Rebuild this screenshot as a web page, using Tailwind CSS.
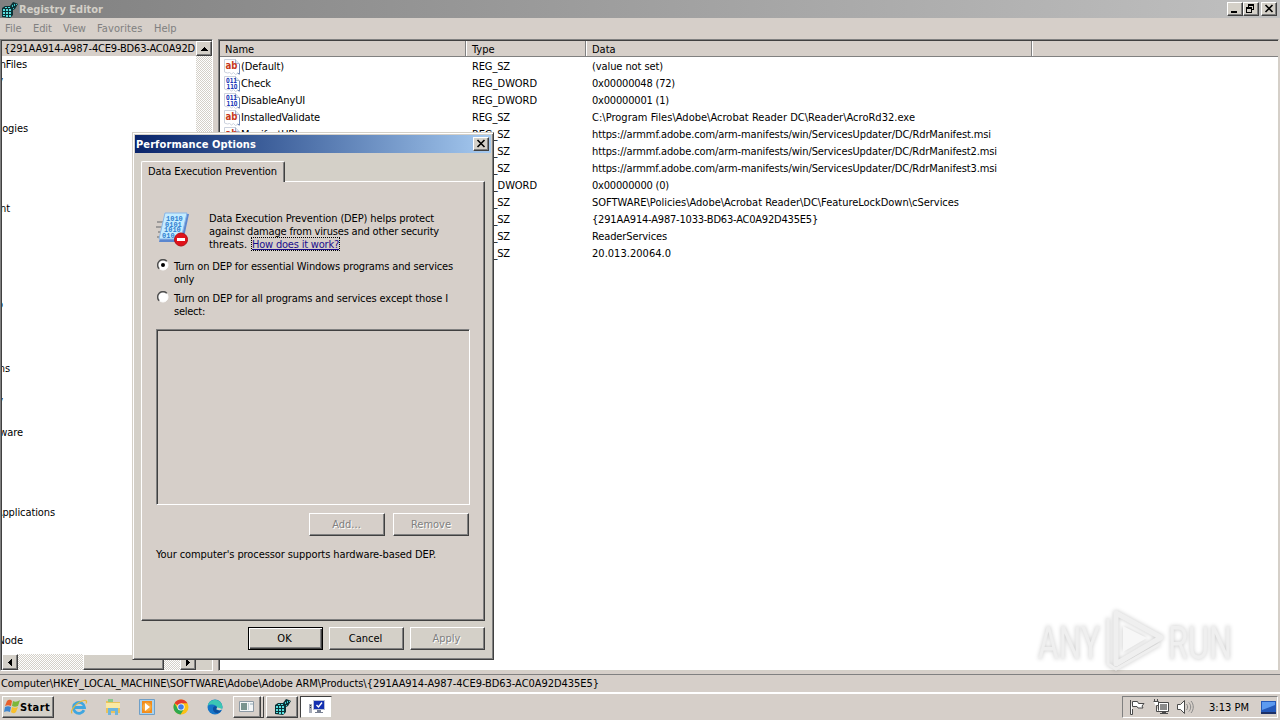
<!DOCTYPE html>
<html lang="en">
<head>
    <meta charset="UTF-8">
    <meta name="viewport" content="width=device-width, initial-scale=1.0">
    <title>Registry Editor</title>
    <script src="https://cdn.jsdelivr.net/npm/@tailwindcss/browser@4"></script>
</head>
<body class="relative flex flex-col w-[1280px] h-[720px] overflow-hidden bg-[#d6cfc9] text-black text-[11px] leading-[13px] font-['DejaVu_Sans_Condensed','DejaVu_Sans',sans-serif] whitespace-nowrap cursor-default">

    <!-- shared symbols -->
    <svg class="hidden">
        <symbol id="ic-reg" viewBox="0 0 16 16">
            <path d="M0 6l3-2h5l3-4 3 1 2 1-3 5-2 1v5l-3 3-8-1z" fill="#0a3236"/>
            <path d="M1 7h2v2H1zM4 7h2v2H4zM7 7h2v2H7zM1 10h2v2H1zM4 10h2v2H4zM7 10h2v2H7zM1 13h2v1H1zM4 13h2v2H4zM7 13h2v2H7zM3 5h2v1H3zM6 5h2v1H6z" fill="#56e0e0"/>
            <path d="M10 3h1v2h-1zM12 2h1v2h-1zM14 2h1v1h-1zM11 6h1v1h-1z" fill="#3fc4c8"/>
        </symbol>
        <symbol id="ic-page" viewBox="0 0 16 16">
            <path d="M.5.5h11l4 4v11l-2-1-2 1-2-2-2 1.500-2-1.500-2 .5-3-1z" fill="#fff" stroke="#ccd2de"/>
            <path d="M11.500.5v4h4" fill="#dfe6f2" stroke="#a4b0c8"/>
            <path d="M15.500 5v10l-2-1" fill="none" stroke="#7186b5"/>
        </symbol>
    </svg>

    <!-- title bar -->
    <div class="flex items-center h-[18px] pl-[2px] pr-[3px] bg-linear-to-r from-[#808080] to-[#c0c0c0]">
        <svg class="w-4 h-4 mt-[1px]"><use href="#ic-reg"/></svg>
        <span class="ml-[1px] font-bold text-[#d4d0c8]" id="t-title">Registry Editor</span>
        <div class="flex ml-auto">
            <div class="w-4 h-[14px] bg-[#d4d0c8] border border-t-white border-l-white border-r-[#404040] border-b-[#404040] shadow-[inset_-1px_-1px_#808080]"><svg class="w-[14px] h-3"><path d="M3 8h6v2H3z"/></svg></div>
            <div class="w-4 h-[14px] bg-[#d4d0c8] border border-t-white border-l-white border-r-[#404040] border-b-[#404040] shadow-[inset_-1px_-1px_#808080]"><svg class="w-[14px] h-3"><path d="M4 1h6v6H8V6h1V3H5v1H4zM2 4h6v6H2zM3 6v3h4V6z" fill-rule="evenodd"/></svg></div>
            <div class="w-4 h-[14px] ml-[2px] bg-[#d4d0c8] border border-t-white border-l-white border-r-[#404040] border-b-[#404040] shadow-[inset_-1px_-1px_#808080]"><svg class="w-[14px] h-3"><path d="M3.500 2l7 7M10.500 2l-7 7" stroke="#000" stroke-width="1.600"/></svg></div>
        </div>
    </div>

    <!-- menu bar -->
    <div class="flex items-center h-[21px] pl-[5px] pb-[1px] text-[#808080]">
        <span class="w-[28px]">File</span><span class="w-[30px] tracking-[-0.1px]">Edit</span><span class="w-[34px] tracking-[-0.2px]">View</span><span class="w-[57px] tracking-[0.1px]">Favorites</span><span>Help</span>
    </div>

    <div class="flex h-[632px]">
        <!-- key tree -->
        <div class="w-[213px] h-[632px] flex flex-col border-l border-t border-[#808080] border-r border-r-white border-b border-b-white">
            <div class="flex grow border-l border-t border-[#404040] overflow-hidden">
                <div class="relative w-[195px] overflow-hidden bg-white" id="tree">
                    <div class="flex items-center w-[195px] h-[15px] pl-[2px] bg-[#d6cfc9] overflow-hidden"><span id="t-guid">{291AA914-A987-4CE9-BD63-AC0A92D</span></div>
                </div>
                <div class="w-4 bg-[repeating-conic-gradient(#d4d0c8_0_25%,#fff_0_50%)] bg-[length:2px_2px]">
                    <div class="flex items-center justify-center w-4 h-[15px] bg-[#d4d0c8] border border-t-white border-l-white border-r-[#404040] border-b-[#404040] shadow-[inset_-1px_-1px_#808080]"><svg class="w-[7px] h-1"><path d="M3 0h1v1h1v1h1v1h1v1H0V3h1V2h1V1h1z"/></svg></div>
                </div>
            </div>
            <div class="flex h-4 border-l border-[#404040] bg-[repeating-conic-gradient(#d4d0c8_0_25%,#fff_0_50%)] bg-[length:2px_2px]">
                <div class="flex items-center justify-center w-4 h-4 bg-[#d4d0c8] border border-t-white border-l-white border-r-[#404040] border-b-[#404040] shadow-[inset_-1px_-1px_#808080]"><svg class="w-1 h-[7px]"><path d="M0 3h1V2h1V1h1V0h1v7H3V6H2V5H1V4H0z"/></svg></div>
                <div class="w-[81px] h-4 ml-[65px] bg-[#d4d0c8] border border-t-white border-l-white border-r-[#404040] border-b-[#404040] shadow-[inset_-1px_-1px_#808080]"></div>
                <div class="flex items-center justify-center w-4 h-4 ml-4 bg-[#d4d0c8] border border-t-white border-l-white border-r-[#404040] border-b-[#404040] shadow-[inset_-1px_-1px_#808080]"><svg class="w-1 h-[7px]"><path d="M0 0h1v1h1v1h1v1h1v1H3v1H2v1H1v1H0z"/></svg></div>
                <div class="grow bg-[#d4d0c8]"></div>
            </div>
        </div>

        <!-- value list -->
        <div class="w-[1061px] ml-[5px] border-l border-t border-[#808080] border-r border-r-[#d4d0c8] border-b border-b-[#d4d0c8]">
            <div class="h-[630px] border-l border-t border-[#404040] bg-white">
                <div class="flex h-4 bg-[#d6cfc9] border-b border-[#808080]">
                    <div class="w-[246px] pl-[5px] pt-[2px] border-r border-[#808080]">Name</div>
                    <div class="w-[120px] pl-[5px] pt-[2px] border-l border-l-white border-r border-[#808080]">Type</div>
                    <div class="w-[446px] pl-[5px] pt-[2px] border-l border-l-white border-r border-r-[#808080]">Data</div>
                    <div class="grow border-l border-white"></div>
                </div>
                <div class="pt-[1px]" id="values"></div>
            </div>
        </div>
    </div>

    <!-- status bar -->
    <div class="h-[19px] mt-[3px] pl-[1px] pt-[2px] border-t border-t-[#808080] border-b border-b-white"><span id="t-status">Computer\HKEY_LOCAL_MACHINE\SOFTWARE\Adobe\Adobe ARM\Products\{291AA914-A987-4CE9-BD63-AC0A92D435E5}</span></div>

    <!-- taskbar -->
    <div class="flex h-[27px] pt-[2px] pl-[2px] border-t border-white">
        <div class="flex items-center w-[52px] h-[22px] pl-[1px] bg-[#d4d0c8] border border-t-white border-l-white border-r-[#404040] border-b-[#404040] shadow-[inset_-1px_-1px_#808080]">
            <svg class="w-4 h-4" viewBox="0 0 16 16"><path d="M3 2c2-2 4-1 5 0L7 7C5 6 3 6 1 7z" fill="#e8602c"/><path d="M9 2c2 1 4 1 7-1l-2 6c-2 1-4 1-6 0z" fill="#7db73b"/><path d="M1 8c2-1 4-1 6 0l-1 5c-2-1-4-1-6 0z" fill="#3f86cf"/><path d="M8 8c2 1 4 1 6 0l-2 5c-2 2-4 1-5 0z" fill="#f8c02c"/></svg>
            <span class="font-bold" id="t-start">Start</span>
        </div>
        <div class="flex items-center h-[22px] ml-[17px] gap-[18px]">
            <svg class="w-4 h-4 overflow-visible" viewBox="0 0 16 16"><path d="M13 11.200A5.500 5.500 0 1 1 13.500 8.500H4" fill="none" stroke="#3fa6e0" stroke-width="2.800"/><path d="M1 14.500C-1 12 5 3 13 1.500c3-.5 3 1.500 2 3" fill="none" stroke="#e6b93a" stroke-width="1.200"/></svg>
            <svg class="w-4 h-4" viewBox="0 0 16 16"><path d="M1 2h5l1 1h8v11H1z" fill="#e9c35c"/><path d="M3 0h5v3H3z" fill="#8bc98d"/><path d="M1 4h14v5H1z" fill="#fae9a3"/><path d="M3 9h10v7h-3v-4H6v4H3z" fill="#6db5dd"/></svg>
            <svg class="w-4 h-4" viewBox="0 0 16 16"><path d="M.5.5h15v15H.5z" fill="#a9d2ee" stroke="#6f9fc7"/><path d="M3 2h10v12H3z" fill="#f28c1c"/><circle cx="8" cy="8" r="4.500" fill="#f7a93c"/><path d="M6 4l5 4-5 4z" fill="#fff"/></svg>
            <svg class="w-4 h-4" viewBox="0 0 16 16"><circle cx="8" cy="8" r="7.500" fill="#fbc116"/><path d="M8 8L1.500 4.200A7.500 7.500 0 0 1 14.500 4.300H8z" fill="#e33b2e"/><path d="M1.500 4.200A7.500 7.500 0 0 0 7.500 15.500L11 10 5 10z" fill="#2da94f"/><circle cx="8" cy="8" r="3.600" fill="#fff"/><circle cx="8" cy="8" r="2.800" fill="#3f7de8"/></svg>
            <svg class="w-4 h-4" viewBox="0 0 16 16"><circle cx="8" cy="8" r="7.500" fill="#1675c8"/><path d="M.6 7A7.500 7.500 0 0 1 15.500 8c0 3-3 3.500-5.500 3-1.500-.5 0-1 0-2.500C10 6 4 4 .6 7z" fill="#3bc6b4"/><path d="M10 11c-2-1-.2-1.500 0-2.500C9.500 6.500 6.500 7 6 9c-.5 3 2 5.500 5 5 1.500-.5 2.500-1.500 3.500-2.500-1.500.5-3 .2-4.500-.5z" fill="#0d4f9e"/><path d="M10 10.500c-1-.5 0-1 0-2 2 0 3 1 5.300 1.500-1 1.500-3.500 1.500-5.300.5z" fill="#d4d0c8"/></svg>
        </div>
        <div class="flex h-[22px] ml-[10px] gap-[2px]">
            <div class="w-[28px] h-[22px] pl-[5px] pt-[3px] border border-t-white border-l-white border-r-[#404040] border-b-[#404040] shadow-[inset_-1px_-1px_#808080]">
                <svg class="w-4 h-[14px]" viewBox="0 0 16 14"><path d="M.5 1.500h14v10H.5z" fill="#f4f6f7" stroke="#8d9aa5"/><path d="M2 3h6v7H2z" fill="#7a948f"/><path d="M9 3h1v7H9zM11 3h3v2h-3z" fill="#c3d0d6"/></svg>
            </div>
            <div class="w-[3px] h-[22px] -ml-[2px] border-t border-t-white border-r border-r-[#404040] border-b border-b-[#404040]"></div>
            <div class="w-[32px] h-[22px] pl-[8px] pt-[2px] border border-t-white border-l-white border-r-[#404040] border-b-[#404040] shadow-[inset_-1px_-1px_#808080]">
                <svg class="w-4 h-4"><use href="#ic-reg"/></svg>
            </div>
            <div class="w-[32px] h-[22px] pl-[8px] pt-[3px] bg-white border border-t-[#404040] border-l-[#404040] border-r-[#d4d0c8] border-b-[#d4d0c8]">
                <svg class="w-4 h-4" viewBox="0 0 16 16"><path d="M4 0h12v10H4z" fill="#b8bfd4"/><path d="M5 1h10v8H5z" fill="#1430b0"/><path d="M7.500 5l2 2 3.500-4.500" fill="none" stroke="#fff" stroke-width="1.400"/><path d="M8 10h4v2H8zM6 12h8v1H6z" fill="#777f92"/><path d="M0 4h3v9H0z" fill="#a6abb8"/><path d="M1 5h1v1H1zM1 7h1v1H1z" fill="#333"/></svg>
            </div>
        </div>
        <div class="flex items-center w-[156px] h-[22px] ml-auto mr-[2px] pl-[6px] border border-t-[#808080] border-l-[#808080] border-r-white border-b-white">
            <svg class="w-4 h-4" viewBox="0 0 16 16"><path d="M1.500 1v14.500h2V10" fill="#fff" stroke="#4a4a4a"/><path d="M3.500 2.500h5l1 2h5.500l-2 2.500 1 2H9l-1-1.500H3.500z" fill="#fff" stroke="#4a4a4a"/></svg>
            <svg class="w-4 h-4 ml-[8px]" viewBox="0 0 16 16"><path d="M5.500 3.500h10v9h-10z" fill="#fff" stroke="#4a4a4a"/><path d="M7 5h7v6H7z" fill="#8b8b8b"/><path d="M9 13h4v1h2v1H7v-1h2z" fill="#4a4a4a"/><path d="M.5 2.500h5v4h-2v6H6" fill="#fff" stroke="#4a4a4a"/><path d="M1.500 0v2M4.500 0v2" stroke="#4a4a4a"/></svg>
            <svg class="w-[17px] h-4 ml-[8px]" viewBox="0 0 17 16"><path d="M.5 5.500h3l4-4v13l-4-4h-3z" fill="#fff" stroke="#4a4a4a"/><path d="M9.500 5c1.500 1.500 1.500 4.500 0 6M11.800 3.500c2.500 2.500 2.500 6.500 0 9M14 2c3 3.500 3 8.500 0 12" fill="none" stroke="#888"/></svg>
            <span class="ml-[15px]" id="t-clock">3:13 PM</span>
            <svg class="w-[15px] h-[13px] ml-auto mr-[1px]" viewBox="0 0 15 13"><path d="M0 0h15v12H0z" fill="#2458b8"/><path d="M1 1h13v3L1 9z" fill="#5c9af0"/><path d="M0 11h15v2H0z" fill="#1c2f66"/></svg>
        </div>
    </div>

    <!-- watermark -->
    <svg class="absolute left-[1034px] top-[604px] w-[204px] h-[70px] drop-shadow-[0_0_2px_rgba(0,0,0,0.22)]" viewBox="0 0 204 70">
        <g fill="#efefef" font-family="Roboto" font-size="47" font-weight="400">
            <text x="4" y="55" textLength="62" lengthAdjust="spacingAndGlyphs">ANY</text>
            <text x="134" y="55" textLength="64" lengthAdjust="spacingAndGlyphs">RUN</text>
        </g>
        <g fill="none" stroke="#efefef" stroke-width="5" stroke-linejoin="round">
            <path d="M82 9l45 24.500L82 60z"/>
            <path d="M74 14v46l8 5 44-25" stroke-width="3"/>
        </g>
        <path d="M89 22l24 12-24 14z" fill="#f7f7f7"/>
    </svg>

    <!-- Performance Options dialog -->
    <div class="absolute left-[132px] top-[132px] w-[362px] h-[528px] p-[2px] bg-[#d4d0c8] border border-t-[#d4d0c8] border-l-[#d4d0c8] border-r-[#404040] border-b-[#404040] shadow-[inset_1px_1px_#fff,inset_-1px_-1px_#808080]">
        <div class="flex items-center h-[18px] pl-[1px] pr-[2px] bg-linear-to-r from-[#0a246a] to-[#a6caf0]">
            <span class="font-bold text-white" id="t-dlg">Performance Options</span>
            <div class="w-4 h-[14px] ml-auto bg-[#d4d0c8] border border-t-white border-l-white border-r-[#404040] border-b-[#404040] shadow-[inset_-1px_-1px_#808080]"><svg class="w-[14px] h-3"><path d="M3.500 2l7 7M10.500 2l-7 7" stroke="#000" stroke-width="1.600"/></svg></div>
        </div>
        <div class="flex flex-col px-[6px] pt-[8px]">
            <div class="relative z-10 w-[144px] h-[21px] -mb-[1px] pl-[6px] pt-[3px] bg-[#d6cfc9] rounded-t-[2px] border-t border-l border-t-white border-l-white border-r border-r-[#404040] shadow-[inset_-1px_0_#808080]"><span id="t-tab">Data Execution Prevention</span></div>
            <div class="w-[344px] h-[440px] px-[14px] pt-[30px] bg-[#d6cfc9] border border-t-white border-l-white border-r-[#404040] border-b-[#404040] shadow-[inset_-1px_-1px_#808080]">
                <div class="flex">
                    <svg class="w-8 h-9 overflow-visible" viewBox="0 0 32 36">
                        <path d="M1 10h8M0 15h8M2 20h6M1 25h5" stroke="#8a8a8a" stroke-width="1.500"/>
                        <path d="M10 2h23l-6 28H3z" fill="#5b87cf"/>
                        <path d="M9 1h22l-6 26H3z" fill="#c4ecff" stroke="#8ab6e8"/>
                        <g fill="#2f7fd0" font-family="Liberation Mono" font-size="7" font-weight="700"><text x="10" y="9">1010</text><text x="9" y="14.500">0101</text><text x="8" y="20">1010</text><text x="6" y="25.500">010</text></g>
                        <circle cx="25" cy="27.500" r="6.500" fill="#e0121a" stroke="#b30d12"/><path d="M21 26h8v3h-8z" fill="#fff"/>
                    </svg>
                    <div class="ml-[21px]" id="dep">
                        <div><span>Data Execution Prevention (DEP) helps protect</span></div>
                        <div><span>against damage from viruses and other security</span></div>
                        <div class="flex"><span>threats.</span><span class="ml-[5px] h-[12px] text-[#1a0d8c] underline outline-1 outline-dotted outline-black">How does it work?</span></div>
                    </div>
                </div>
                <div class="flex mt-[9px] pl-[1px]">
                    <svg class="w-3 h-3 -mt-[1px]" viewBox="0 0 12 12"><circle cx="6" cy="6" r="5" fill="#fff" stroke="#fff"/><path d="M2.200 9.800A5.300 5.300 0 0 1 9.800 2.200" fill="none" stroke="#505050" stroke-width="1.500"/><circle cx="6" cy="6" r="2" fill="#000"/></svg>
                    <div class="ml-[5px]" id="r1"><div><span>Turn on DEP for essential Windows programs and services</span></div><div><span>only</span></div></div>
                </div>
                <div class="flex mt-[6px] pl-[1px]">
                    <svg class="w-3 h-3 -mt-[1px]" viewBox="0 0 12 12"><circle cx="6" cy="6" r="5" fill="#fff" stroke="#fff"/><path d="M2.200 9.800A5.300 5.300 0 0 1 9.800 2.200" fill="none" stroke="#505050" stroke-width="1.500"/></svg>
                    <div class="ml-[5px]" id="r2"><div><span>Turn on DEP for all programs and services except those I</span></div><div><span>select:</span></div></div>
                </div>
                <div class="w-[314px] h-[176px] mt-[11px] border border-t-[#808080] border-l-[#808080] border-r-white border-b-white shadow-[inset_1px_1px_#404040]"></div>
                <div class="flex justify-end gap-[8px] mt-[8px] pr-[1px] text-[#808080] [text-shadow:1px_1px_#fff]">
                    <div class="flex items-center justify-center w-[76px] h-[23px] pr-[1px] border border-t-white border-l-white border-r-[#404040] border-b-[#404040] shadow-[inset_-1px_-1px_#808080]">Add...</div>
                    <div class="flex items-center justify-center w-[76px] h-[23px] border border-t-white border-l-white border-r-[#404040] border-b-[#404040] shadow-[inset_-1px_-1px_#808080]">Remove</div>
                </div>
                <div class="mt-[12px]"><span id="t-cpu">Your computer's processor supports hardware-based DEP.</span></div>
            </div>
            <div class="flex justify-end gap-[6px] mt-[6px]">
                <div class="flex items-center justify-center w-[75px] h-[23px] pr-[2px] border border-black shadow-[inset_1px_1px_#fff,inset_-1px_-1px_#404040,inset_-2px_-2px_#808080]">OK</div>
                <div class="flex items-center justify-center w-[75px] h-[23px] pr-[2px] border border-t-white border-l-white border-r-[#404040] border-b-[#404040] shadow-[inset_-1px_-1px_#808080]">Cancel</div>
                <div class="flex items-center justify-center w-[75px] h-[23px] pr-[2px] text-[#808080] [text-shadow:1px_1px_#fff] border border-t-white border-l-white border-r-[#404040] border-b-[#404040] shadow-[inset_-1px_-1px_#808080]">Apply</div>
            </div>
        </div>
    </div>
</body>
<script>
    // Value list: icon kind, name, type, data, width of the data text
    const values = [
        ['sz', '(Default)', 'REG_SZ', '(value not set)', 71],
        ['dw', 'Check', 'REG_DWORD', '0x00000048 (72)', 83],
        ['dw', 'DisableAnyUI', 'REG_DWORD', '0x00000001 (1)', 77],
        ['sz', 'InstalledValidate', 'REG_SZ', 'C:\\Program Files\\Adobe\\Acrobat Reader DC\\Reader\\AcroRd32.exe', 323],
        ['sz', 'ManifestURL', 'REG_SZ', 'https://armmf.adobe.com/arm-manifests/win/ServicesUpdater/DC/RdrManifest.msi', 399],
        ['sz', '', 'REG_SZ', 'https://armmf.adobe.com/arm-manifests/win/ServicesUpdater/DC/RdrManifest2.msi', 405],
        ['sz', '', 'REG_SZ', 'https://armmf.adobe.com/arm-manifests/win/ServicesUpdater/DC/RdrManifest3.msi', 405],
        ['dw', '', 'REG_DWORD', '0x00000000 (0)', 77],
        ['sz', '', 'REG_SZ', 'SOFTWARE\\Policies\\Adobe\\Acrobat Reader\\DC\\FeatureLockDown\\cServices', 367],
        ['sz', '', 'REG_SZ', '{291AA914-A987-1033-BD63-AC0A92D435E5}', 226],
        ['sz', '', 'REG_SZ', 'ReaderServices', 75],
        ['sz', '', 'REG_SZ', '20.013.20064.0', 79]
    ];
    const nameWidths = { '(Default)': 43, 'Check': 30, 'DisableAnyUI': 64, 'InstalledValidate': 79, 'ManifestURL': 59 };
    const typeWidths = { REG_SZ: 38, REG_DWORD: 65 };

    const glyphs = {
        sz: '<text x="1.500" y="9.500" textLength="12" lengthAdjust="spacingAndGlyphs" fill="#c8391c" font-family="DejaVu Sans" font-weight="700" font-size="10">ab</text>',
        dw: '<g fill="#2038b8" font-family="DejaVu Sans" font-weight="700" font-size="7"><text x="2" y="6.500" textLength="11" lengthAdjust="spacingAndGlyphs">011</text><text x="2.500" y="12.500" textLength="11" lengthAdjust="spacingAndGlyphs">110</text></g>'
    };

    // Set letter spacing so that the text takes the given width
    const ctx = document.createElement('canvas').getContext('2d');
    function fit(el, width, font = '11px') {
        if (!el.textContent) return;
        ctx.font = font + ' "DejaVu Sans Condensed", "DejaVu Sans", sans-serif';
        const natural = ctx.measureText(el.textContent).width;
        el.style.letterSpacing = ((width - natural) / el.textContent.length).toFixed(3) + 'px';
    }

    const list = document.getElementById('values');
    values.forEach(([kind, name, type, data, width]) => {
        const row = document.createElement('div');
        row.className = 'flex items-center h-[17px]';
        row.innerHTML = `<div class="flex items-center w-[246px] pl-[4px]"><svg class="w-4 h-4 mr-[1px]"><use href="#ic-page"/>${name ? glyphs[kind] : ''}</svg><span></span></div><div class="w-[120px] pl-[6px]"><span></span></div><div class="pl-[6px]"><span></span></div>`;
        const [a, b, c] = row.querySelectorAll('span');
        a.textContent = name;
        b.textContent = type;
        c.textContent = data;
        list.appendChild(row);
        fit(a, nameWidths[name]);
        fit(b, typeWidths[type]);
        fit(c, width);
    });

    // Tree labels scrolled off to the left: text, top, right edge
    const tree = document.getElementById('tree');
    [['CommonFiles', 17, 26], ['Policy', 33, 2], ['Technologies', 81, 27], ['Client', 161, 9], ['Audio', 257, 2], ['Extensions', 321, 9], ['Policy', 353, 2], ['Software', 385, 22], ['RegisteredApplications', 465, 54], ['Wow6432Node', 593, 22]].forEach(([text, top, right]) => {
        const el = document.createElement('span');
        el.className = 'absolute tracking-[-0.1px]';
        el.textContent = text;
        el.style.top = top + 'px';
        el.style.right = (195 - right) + 'px';
        tree.appendChild(el);
    });

    const sizes = { 't-guid': 191, 't-status': 598, 't-clock': 40, 't-tab': 129, 't-cpu': 280 };
    for (const id in sizes) fit(document.getElementById(id), sizes[id]);
    fit(document.getElementById('t-title'), 84, 'bold 11px');
    fit(document.getElementById('t-dlg'), 120, 'bold 11px');
    fit(document.getElementById('t-start'), 30, 'bold 11px');

    [['dep', [225, 230, 38, 87]], ['r1', [279, 20]], ['r2', [274, 31]]].forEach(([id, widths]) => {
        document.querySelectorAll('#' + id + ' span').forEach((el, i) => fit(el, widths[i]));
    });
</script>
</html>
